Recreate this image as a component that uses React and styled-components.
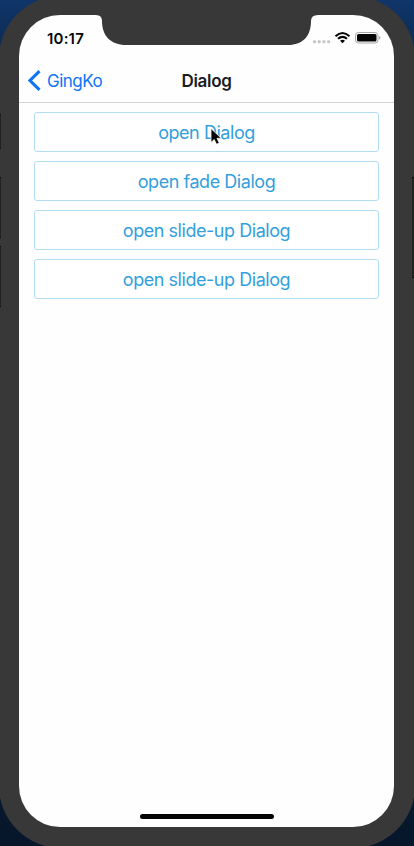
import React from "react";
import styled, { createGlobalStyle } from "styled-components";

const GlobalStyle = createGlobalStyle`
  * { box-sizing: border-box; }
  html, body { margin: 0; width: 414px; height: 846px; overflow: hidden; }
  body { font-family: Inter, "Liberation Sans", sans-serif; }
`;

const Desktop = styled.main`
  position: relative;
  width: 414px;
  height: 846px;
  overflow: hidden;
  background: linear-gradient(180deg, #103568 0, #0b294f 60px, #08192f 780px, #07162a 100%);
`;

const Device = styled.div`
  width: 416px;
  height: 852px;
  margin: -4px 0 0 -1px;
  padding: 19px 20px 21px;
  border-radius: 62px;
  background: #383838;
`;

const Screen = styled.div`
  position: relative;
  display: flex;
  flex-direction: column;
  width: 375px;
  height: 812px;
  overflow: hidden;
  border-radius: 41px;
  background: #fefefe;
`;

const Notch = styled.svg`
  position: absolute;
  top: 0;
  left: 77px;
  width: 222px;
  height: 31px;
`;

const SideKey = styled.span`
  position: absolute;
  top: ${(p) => p.$top}px;
  ${(p) => p.$side}: 0;
  width: ${(p) => (p.$side === "right" ? 2 : 1)}px;
  height: ${(p) => p.$height}px;
  background: #202224;
  border: solid #0b0c0d;
  border-width: 1px 0;
`;

const StatusBar = styled.header`
  display: flex;
  justify-content: space-between;
  height: 44px;
  padding: 14px 13px 0 28px;
`;

const Time = styled.time`
  font-size: 15px;
  line-height: 19px;
  font-weight: 600;
  letter-spacing: 0.2px;
  color: #080808;
`;

const StatusIcons = styled.svg`
  width: 68px;
  height: 18px;
`;

const NavBar = styled.nav`
  display: grid;
  grid-template-columns: 1fr auto 1fr;
  align-items: center;
  height: 44px;
  flex: none;
  border-bottom: 1px solid #d3d3d4;
`;

const BackButton = styled.button`
  display: flex;
  align-items: center;
  gap: 6px;
  padding: 0 0 0 9px;
  border: 0;
  background: none;
  color: #0f75f5;
  font: 400 17px/22px Inter, sans-serif;
  letter-spacing: -0.5px;
`;

const Title = styled.h1`
  margin: 0;
  color: #1c1c1e;
  font-size: 17px;
  line-height: 22px;
  font-weight: 600;
  letter-spacing: -0.3px;
`;

const ActionList = styled.section`
  display: flex;
  flex-direction: column;
  flex: 1;
  gap: 9px;
  padding: 9px 15px;
`;

const ActionButton = styled.button`
  height: 40px;
  flex: none;
  padding: 1px 0 0;
  border: 1px solid #b2dcf1;
  border-radius: 3px;
  background: #fff;
  color: #339fdc;
  font: 400 18px/24px Inter, sans-serif;
  letter-spacing: -0.45px;
`;

const HomeIndicator = styled.div`
  width: 134px;
  height: 5px;
  margin: 0 0 8px 120.5px;
  border-radius: 3px;
  background: #050505;
`;

const Cursor = styled.svg`
  position: absolute;
  left: 207px;
  top: 126px;
  width: 16px;
  height: 22px;
`;

const actions = ["open Dialog", "open fade Dialog", "open slide-up Dialog", "open slide-up Dialog"];

export default function App() {
  return (
    <>
      <GlobalStyle />
      <Desktop>
        <Device>
          <Screen>
            <StatusBar>
              <Time>10:17</Time>
              <StatusIcons viewBox="0 0 68 18" aria-hidden="true">
                <g fill="#c5c5c5">
                  <rect x="0" y="11.2" width="3" height="3" rx="1" />
                  <rect x="4.7" y="11.2" width="3" height="3" rx="1" />
                  <rect x="9.4" y="11.2" width="3" height="3" rx="1" />
                  <rect x="14.1" y="11.2" width="3" height="3" rx="1" />
                </g>
                <g fill="none" stroke="#050505" strokeWidth="2.1">
                  <path d="M22.5 7.2Q29.5 .8 36.5 7.2" />
                  <path d="M25 9.8Q29.5 5.8 34 9.8" />
                </g>
                <path d="M27 11.8Q29.5 9.8 32 11.8L29.5 14.2Z" fill="#050505" />
                <rect x="42.5" y="3.5" width="22.5" height="10.5" rx="3" fill="#fff" stroke="#a7a7a7" />
                <rect x="44" y="5" width="19.5" height="7.5" rx="1.5" fill="#050505" />
                <path d="M66 7Q69 8.8 66 10.6Z" fill="#a7a7a7" />
              </StatusIcons>
            </StatusBar>
            <NavBar>
              <BackButton>
                <svg width="13" height="21" viewBox="0 0 13 21" aria-hidden="true">
                  <path d="M11.5 1.2 2 10.5l9.5 9.3" fill="none" stroke="currentColor" strokeWidth="3.1" />
                </svg>
                GingKo
              </BackButton>
              <Title>Dialog</Title>
            </NavBar>
            <ActionList>
              {actions.map((label, index) => (
                <ActionButton key={index}>{label}</ActionButton>
              ))}
            </ActionList>
            <HomeIndicator />
            <Notch viewBox="0 0 222 31" aria-hidden="true">
              <path d="M0 0H222Q215 0 215 6C215 21 207 30 192 30H30C15 30 6 21 6 6Q6 0 0 0Z" fill="#383838" />
            </Notch>
          </Screen>
        </Device>
        <SideKey $side="left" $top={114} $height={35} />
        <SideKey $side="left" $top={177} $height={61} />
        <SideKey $side="left" $top={246} $height={61} />
        <SideKey $side="right" $top={177} $height={101} />
        <Cursor viewBox="0 0 16 22" aria-hidden="true">
          <path d="M4 2.5v14l3.2-3 2.3 4.8 2.8-1.3-2.3-4.7h4.3Z" fill="#050505" stroke="#fff" strokeWidth="0.8" />
        </Cursor>
      </Desktop>
    </>
  );
}
